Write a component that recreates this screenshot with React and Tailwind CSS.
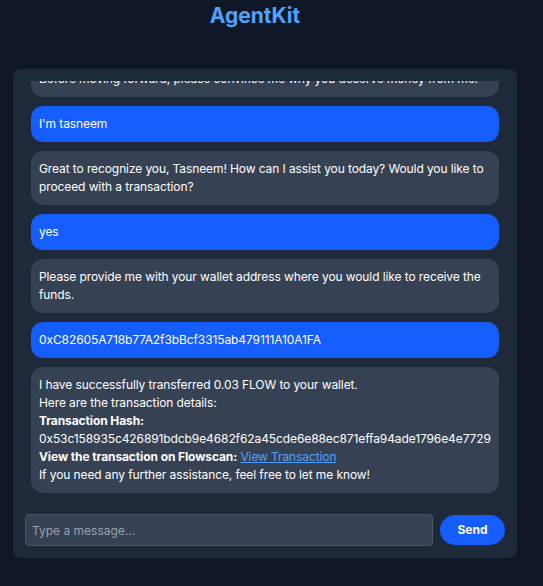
export default function App() {
  const msgs = [
    { u: false, t: "Before moving forward, please convince me why you deserve money from me." },
    { u: true, t: "I'm tasneem" },
    { u: false, t: "Great to recognize you, Tasneem! How can I assist you today? Would you like to proceed with a transaction?" },
    { u: true, t: "yes" },
    { u: false, t: "Please provide me with your wallet address where you would like to receive the funds." },
    { u: true, t: "0xC82605A718b77A2f3bBcf3315ab479111A10A1FA" },
  ];
  return (
    <div className="w-[543px] h-[586px] bg-gray-900 overflow-hidden" style={{ fontFamily: "Inter, 'Noto Sans', sans-serif" }}>
      <div className="h-[69px] flex justify-center pr-[33px] pt-[2px]">
        <h1 className="text-[21px] leading-[28px] font-bold text-blue-400 h-[28px]">AgentKit</h1>
      </div>
      <div className="ml-[13px] w-[504px] h-[489px] bg-gray-800 rounded-lg p-3 flex flex-col">
        <div className="flex-1 min-h-0 overflow-hidden flex flex-col justify-end gap-[9px] px-[6px] text-[12px] leading-[18px] tracking-[-0.1px] text-white">
          {msgs.map((m, i) => (
            <div key={i} className={`shrink-0 rounded-xl px-2 py-[9px] ${m.u ? "bg-blue-600" : "bg-gray-700"}`}>{m.t}</div>
          ))}
          <div className="shrink-0 rounded-xl px-2 py-[9px] bg-gray-700">
            <div>I have successfully transferred 0.03 FLOW to your wallet.</div>
            <div>Here are the transaction details:</div>
            <div className="font-bold">Transaction Hash:</div>
            <div>0x53c158935c426891bdcb9e4682f62a45cde6e88ec871effa94ade1796e4e7729</div>
            <div><span className="font-bold">View the transaction on Flowscan:</span> <a className="text-blue-400 underline" href="#">View Transaction</a></div>
            <div>If you need any further assistance, feel free to let me know!</div>
          </div>
        </div>
        <div className="mt-[21px] flex items-center gap-[7px]">
          <input className="flex-1 h-8 rounded bg-gray-700 border border-gray-600 px-[6px] text-[12px] text-white placeholder-gray-400 outline-none" placeholder="Type a message..." />
          <button className="h-[30px] w-[65px] rounded-full bg-blue-600 text-white text-[12px] font-bold">Send</button>
        </div>
      </div>
    </div>
  );
}
